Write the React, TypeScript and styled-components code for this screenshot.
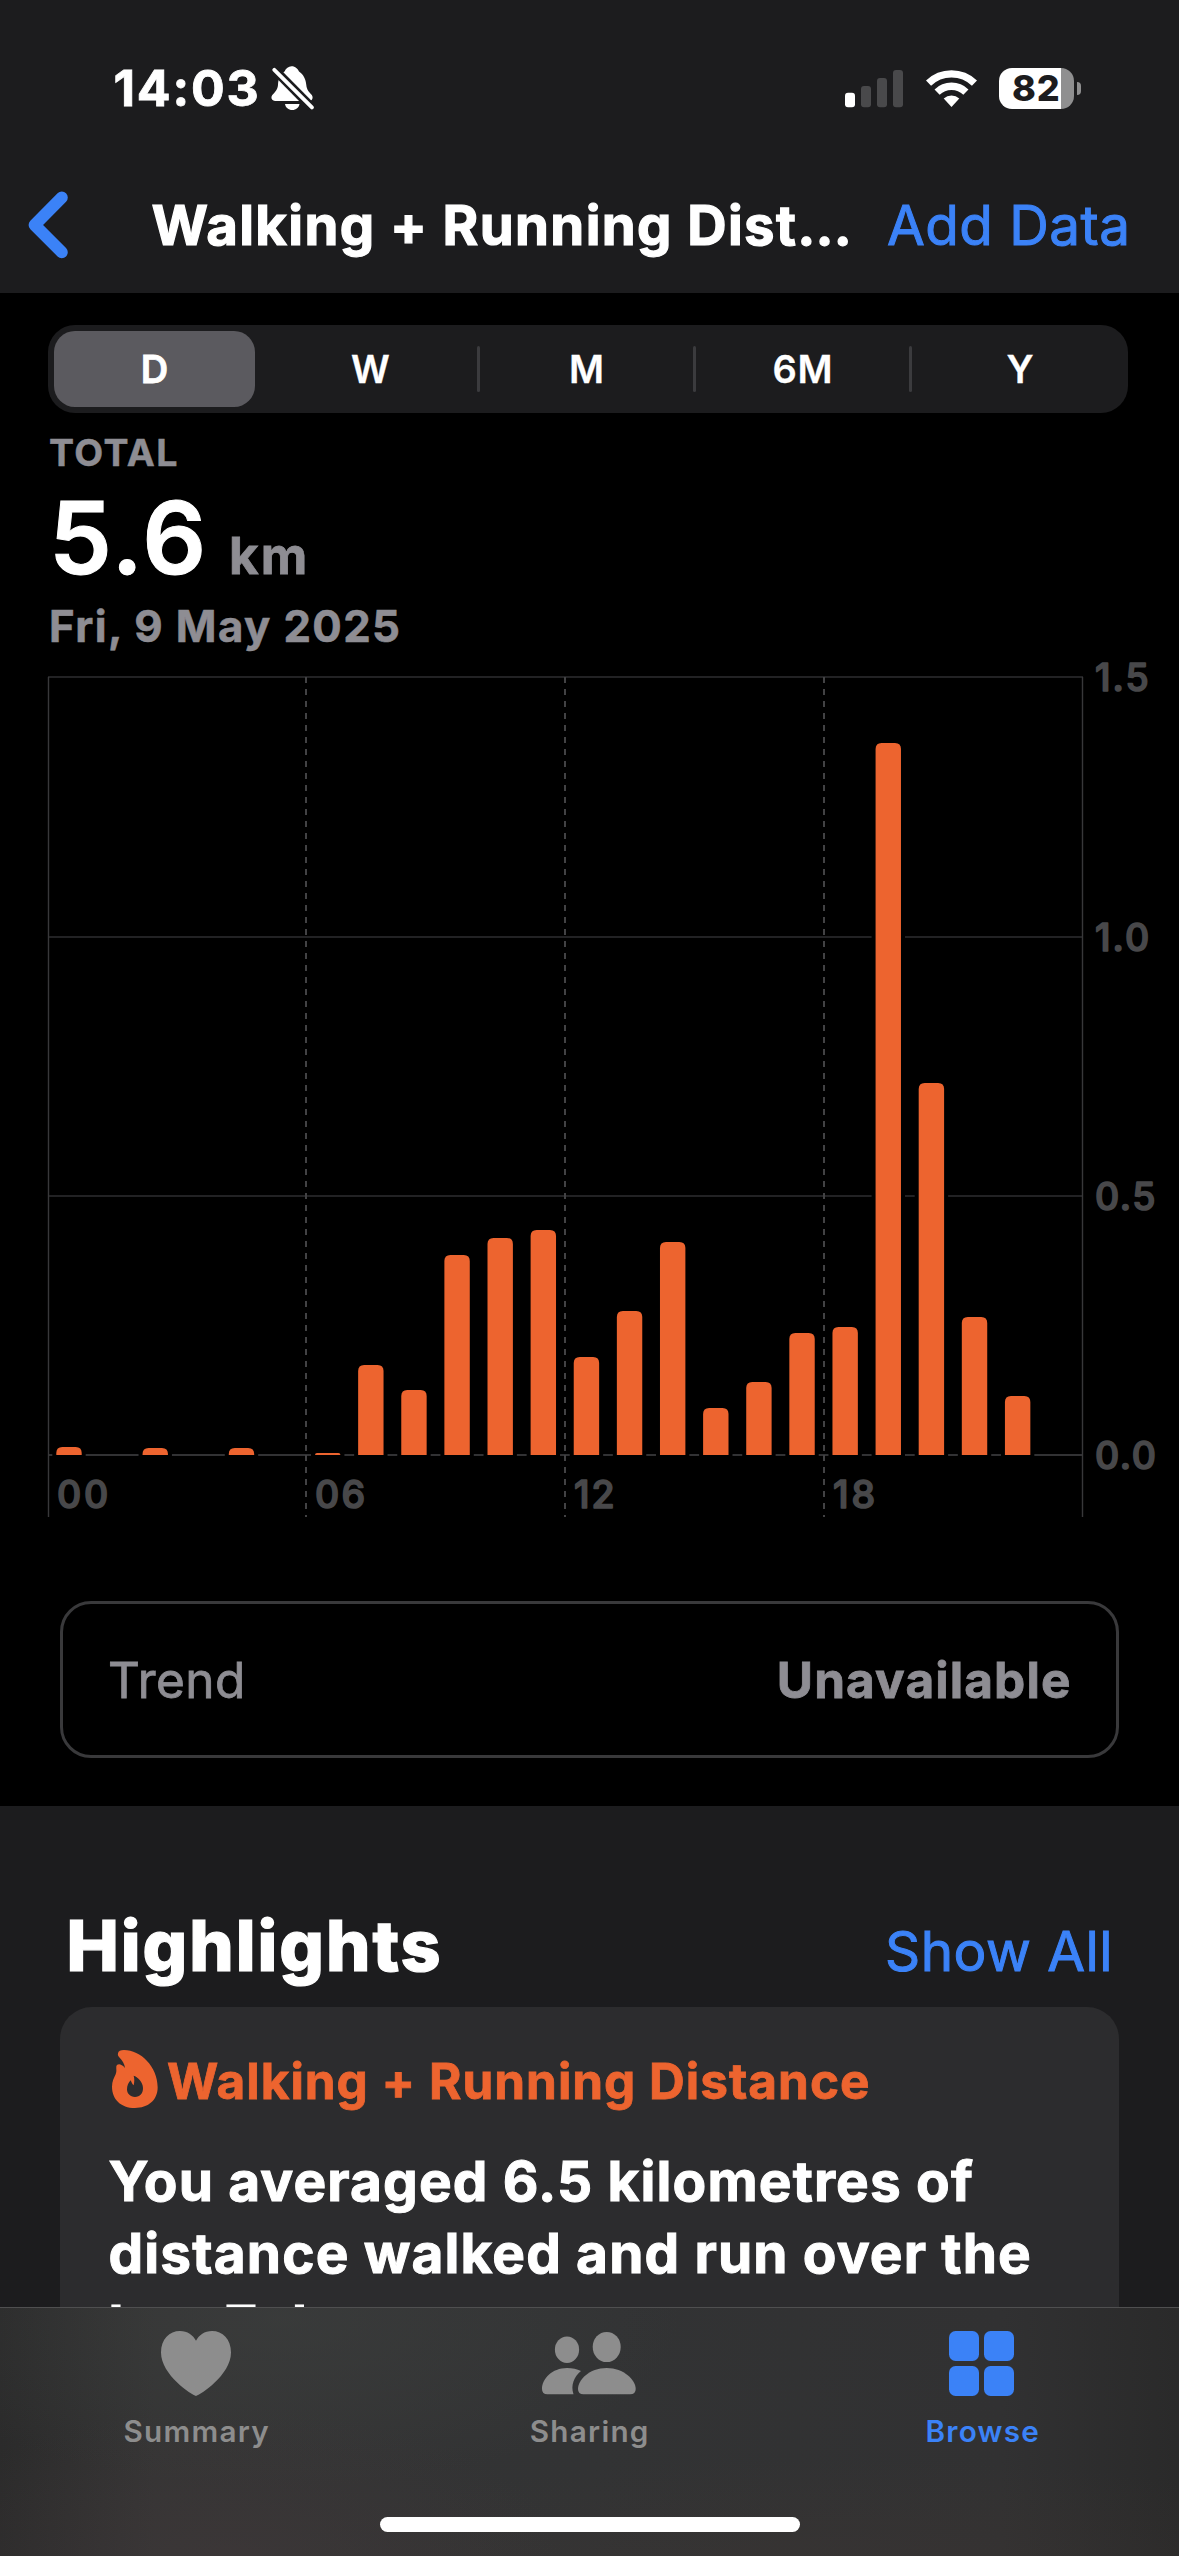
import React from "react";
import styled, { createGlobalStyle } from "styled-components";

const blue = "#3b82f7";
const orange = "#ed642f";
const grey = "#8e8d93";

const GlobalStyle = createGlobalStyle`
  * { box-sizing: border-box; }
  html { background: #000; }
  body {
    margin: 0;
    background: #000;
    color: #fff;
    font-family: Inter, "Liberation Sans", sans-serif;
  }
  svg { display: block; flex: none; }
`;

const Screen = styled.div`
  position: relative;
  width: 1179px;
  height: 2556px;
  overflow: hidden;
  background: #000;
`;

const Header = styled.header`
  height: 293px;
  background: #1c1c1e;
`;

const StatusBar = styled.div`
  display: flex;
  align-items: center;
  height: 176px;
  padding: 0 98px 0 113.5px;
`;

const Time = styled.span`
  width: 157.5px;
  font-size: 50px;
  font-weight: 700;
  letter-spacing: 1.8px;
  line-height: 60px;
  -webkit-text-stroke: 0.8px;
`;

const StatusIcons = styled.div`
  display: flex;
  align-items: center;
  gap: 22.4px;
  margin-left: auto;
`;

const Battery = styled.div`
  display: flex;
  align-items: center;
  gap: 3px;
`;

const BatteryBody = styled.div`
  width: 75px;
  height: 41px;
  padding-left: 13px;
  border-radius: 13px;
  background: linear-gradient(90deg, #fff 83%, #8f8f90 83%);
  color: #1c1c1e;
  font-size: 36px;
  font-weight: 800;
  letter-spacing: 0.8px;
  line-height: 41px;
`;

const BatteryNub = styled.div`
  width: 4px;
  height: 13px;
  border-radius: 0 5px 5px 0;
  background: #8f8f90;
`;

const NavBar = styled.nav`
  display: flex;
  align-items: center;
  height: 98px;
  padding-left: 28px;
`;

const NavTitle = styled.h1`
  width: 735.5px;
  margin: 0 0 0 83.4px;
  font-size: 54.5px;
  font-weight: 700;
  letter-spacing: 1.38px;
  line-height: 66px;
  white-space: nowrap;
  -webkit-text-stroke: 1.2px;
`;

const LinkText = styled.span<{ $spacing: number }>`
  color: ${blue};
  font-size: 54.8px;
  letter-spacing: ${(p) => p.$spacing}px;
  line-height: 66px;
  white-space: nowrap;
  -webkit-text-stroke: 1px;
`;

const Segments = styled.div`
  display: flex;
  align-items: center;
  width: 1080px;
  height: 88px;
  margin: 32px 0 0 48px;
  border-radius: 27px;
  background: #1c1c1e;
`;

const Segment = styled.div<{ $selected?: boolean; $last?: boolean }>`
  display: flex;
  align-items: center;
  justify-content: center;
  width: ${(p) => (p.$selected ? 201 : p.$last ? 216 : 213)}px;
  height: 76px;
  margin: 0 ${(p) => (p.$selected ? 6 : 0)}px;
  border-radius: 21px;
  background: ${(p) => (p.$selected ? "#5b5a5f" : "transparent")};
  font-size: 38px;
  font-weight: 600;
  text-indent: 0.8px;
  letter-spacing: 0.8px;
  -webkit-text-stroke: ${(p) => (p.$selected ? 0.8 : 0.3)}px;
`;

const Divider = styled.div<{ $hidden?: boolean }>`
  width: 3px;
  height: 46px;
  border-radius: 2px;
  background: ${(p) => (p.$hidden ? "transparent" : "#3b3b3e")};
`;

const Summary = styled.section`
  margin-top: 15px;
  padding-left: 49px;
  color: ${grey};
  font-weight: 700;
`;

const Caption = styled.div`
  font-size: 37.5px;
  letter-spacing: 1.5px;
  line-height: 50px;
  -webkit-text-stroke: 0.5px;
`;

const ValueRow = styled.div`
  display: flex;
  align-items: baseline;
  height: 121px;
`;

const Value = styled.span`
  width: 180px;
  color: #fff;
  font-size: 100px;
  font-weight: 600;
  letter-spacing: 1.8px;
  line-height: 119px;
  -webkit-text-stroke: 1px;
`;

const Unit = styled.span`
  font-size: 51px;
  letter-spacing: 2.2px;
  line-height: 60px;
  -webkit-text-stroke: 0.8px;
`;

const DateLine = styled.div`
  font-size: 43.7px;
  letter-spacing: 1.4px;
  line-height: 55px;
  -webkit-text-stroke: 0.6px;
`;

const ChartLabel = styled.text`
  fill: #48484a;
  stroke: #48484a;
  stroke-width: 1.6px;
  stroke-linejoin: round;
  font-size: 37.5px;
  font-weight: 500;
`;

const Trend = styled.div`
  display: flex;
  align-items: center;
  justify-content: space-between;
  width: 1059px;
  height: 157px;
  margin: 71px 0 48px 60px;
  padding: 0 45px;
  border: 3px solid #39393b;
  border-radius: 31px;
  color: ${grey};
  font-size: 49.5px;
`;

const TrendLabel = styled.span`
  letter-spacing: 0.5px;
  -webkit-text-stroke: 0.8px;
`;

const TrendValue = styled.span`
  margin-right: -0.5px;
  font-weight: 700;
  letter-spacing: 1.1px;
  -webkit-text-stroke: 0.8px;
`;

const Highlights = styled.section`
  height: 760px;
  padding: 98px 60px 0;
  background: #1c1c1e;
`;

const SectionHead = styled.div`
  display: flex;
  align-items: baseline;
  justify-content: space-between;
  height: 84px;
  padding: 0 6px 0 6.5px;
`;

const SectionTitle = styled.h2`
  margin: 0;
  font-size: 70px;
  font-weight: 800;
  letter-spacing: 1.95px;
  line-height: 84px;
  -webkit-text-stroke: 1.2px;
`;

const Card = styled.article`
  height: 520px;
  margin-top: 19px;
  padding: 43px 48.5px;
  border-radius: 32px;
  background: #2c2c2e;
`;

const CardHead = styled.div`
  display: flex;
  align-items: center;
  gap: 9px;
  height: 58px;
  padding-left: 3.5px;
  color: ${orange};
`;

const CardTitle = styled.h3`
  margin: 4px 0 0;
  font-size: 49.5px;
  font-weight: 700;
  letter-spacing: 1px;
  white-space: nowrap;
  -webkit-text-stroke: 0.8px;
`;

const CardBody = styled.p`
  margin: 37px 0 0;
  font-size: 55px;
  font-weight: 700;
  letter-spacing: 1.12px;
  line-height: 72px;
  white-space: nowrap;
  -webkit-text-stroke: 1px;
`;

const TabBar = styled.nav`
  position: absolute;
  left: 0;
  bottom: 0;
  display: grid;
  grid-template: 225px 1fr / repeat(3, 1fr);
  justify-items: center;
  width: 1179px;
  height: 249px;
  border-top: 1px solid #4f4f50;
  background:
    radial-gradient(ellipse 330px 150px at 230px 250px, rgba(70, 58, 60, 0.4), transparent),
    radial-gradient(ellipse 560px 110px at 830px 260px, rgba(64, 54, 50, 0.35), transparent),
    radial-gradient(ellipse 400px 170px at 280px 10px, rgba(64, 67, 66, 0.45), transparent),
    linear-gradient(90deg, #2b2b2b, #343434 13%, #323334 50%, #313132 85%, #2a2a2a);
`;

const Tab = styled.div<{ $active?: boolean }>`
  display: flex;
  flex-direction: column;
  align-items: center;
  margin-right: 1px;
  padding-top: 23px;
  color: ${(p) => (p.$active ? blue : "#8d8d8d")};
`;

const TabLabel = styled.span`
  margin-top: 17px;
  padding-left: 1.5px;
  font-size: 29.7px;
  font-weight: 600;
  letter-spacing: 1.25px;
  line-height: 36px;
`;

const HomeIndicator = styled.div`
  position: absolute;
  left: 380px;
  bottom: 24px;
  width: 420px;
  height: 15px;
  border-radius: 8px;
  background: #fff;
`;

const BellOff = () => (
  <svg width="43" height="45" viewBox="270.5 66 43 45">
    <path
      fill="#fff"
      d="M291 66.3C295 66.3 297.3 69 298.5 71.5C303 74.5 305.3 79 305.8 85C306.2 90 309 92.5 311.3 95C313 97.5 312 101 308.5 101H274.5C271 101 270 97.5 271.8 95C274.5 92 277 90 277.5 85C277.8 79 279.5 74.5 284 71.5C285.5 68.5 288 66.3 291 66.3ZM284.5 104H299C298.5 107.5 295.5 110 291.8 110C288 110 285 107.5 284.5 104Z"
    />
    <path d="M270 65.7L315 111.3" stroke="#1c1c1e" strokeWidth="9" />
    <path d="M273.8 69.8L311.4 107.4" stroke="#fff" strokeWidth="3.8" strokeLinecap="round" />
  </svg>
);

const Signal = () => (
  <svg width="58" height="41" viewBox="846 67 58 41">
    <rect x="846" y="91.7" width="10" height="14.6" rx="3" fill="#fff" />
    <rect x="862" y="85" width="10" height="21.3" rx="3" fill="#49494b" />
    <rect x="878" y="77" width="10" height="29.3" rx="3" fill="#49494b" />
    <rect x="894" y="69" width="10" height="37.3" rx="3" fill="#49494b" />
  </svg>
);

const Wifi = () => (
  <svg width="51" height="41" viewBox="-25.5 -39 51 41">
    <g fill="none" stroke="#fff">
      <path d="M-23 -23.8A33.1 33.1 0 0 1 23 -23.8" strokeWidth="7.4" />
      <path d="M-14.4 -14.9A20.7 20.7 0 0 1 14.4 -14.9" strokeWidth="7.4" />
    </g>
    <path d="M0 0L-7.8 -8.4A11.6 11.6 0 0 1 7.8 -8.4Z" fill="#fff" />
  </svg>
);

const Back = () => (
  <svg width="40" height="68" viewBox="28 191 40 68">
    <path
      d="M61.8 197.6L34.6 225L61.8 252.2"
      fill="none"
      stroke={blue}
      strokeWidth="12"
      strokeLinecap="round"
      strokeLinejoin="round"
    />
  </svg>
);

const Flame = () => (
  <svg width="46" height="58" viewBox="36 48 138 174">
    <path
      fill="currentColor"
      fillRule="evenodd"
      d="M54 58C55 51 62 48 72 48C122 48 173 98 173 160C173 200 143 222 105 222C62 222 36 195 36 158C36 142 42 132 47 121C51 112 48 105 49 97C51 88 64 88 75 102C74 88 66 79 59 71C54 66 53 63 54 58ZM101 125C112 128 129 143 129 162C129 178 120 189 105 189C90 189 81 178 81 166C81 155 86 145 92 139C95 145 96 150 101 154C103 144 104 135 101 125Z"
    />
  </svg>
);

const Heart = () => (
  <svg width="70" height="65" viewBox="0 0 70 65">
    <path
      fill="currentColor"
      d="M35 65C31 64 0 44 0 21.5C0 8 8.5 0 19 0C26.5 0 32 4 35 9.8C38 4 43.5 0 51 0C61.5 0 70 8 70 21.5C70 44 39 64 35 65Z"
    />
  </svg>
);

const People = () => (
  <svg width="94" height="65" viewBox="542 2331 94 65">
    <g fill="currentColor">
      <ellipse cx="567" cy="2349.7" rx="12.1" ry="13.2" />
      <ellipse cx="606.7" cy="2347" rx="14" ry="15.1" />
      <path d="M542 2389C542 2379 552 2368 567 2368Q575 2368 581 2371C574 2377 570.5 2385 573.5 2394.3H547.5Q542 2394.3 542 2389Z" />
      <path d="M578 2389C578 2380 589 2368 606.7 2368C624 2368 635.7 2380 635.7 2389Q635.7 2394.3 630 2394.3H583.5Q578 2394.3 578 2389Z" />
    </g>
  </svg>
);

const Squares = () => (
  <svg width="65" height="65" viewBox="0 0 65 65">
    <g fill="currentColor">
      <rect x="0" y="0" width="30" height="30" rx="6.5" />
      <rect x="35" y="0" width="30" height="30" rx="6.5" />
      <rect x="0" y="35" width="30" height="30" rx="6.5" />
      <rect x="35" y="35" width="30" height="30" rx="6.5" />
    </g>
  </svg>
);

/* Hour of the day and the y at which its bar starts. */
const bars: [number, number][] = [
  [0, 1447], [2, 1448], [4, 1448], [6, 1453], [7, 1365], [8, 1390], [9, 1255],
  [10, 1238], [11, 1230], [12, 1357], [13, 1311], [14, 1242], [15, 1408],
  [16, 1382], [17, 1333], [18, 1327], [19, 743], [20, 1083], [21, 1317], [22, 1396],
];

const barPath = (x: number, y: number) => {
  const r = Math.min(6, 1455 - y);
  return `M${x} 1455V${y + r}Q${x} ${y} ${x + r} ${y}H${x + 25.4 - r}Q${x + 25.4} ${y} ${x + 25.4} ${y + r}V1455Z`;
};

const hours: [string, number, number][] = [
  ["00", 57, 2.8],
  ["06", 315, 2.2],
  ["12", 574, 2],
  ["18", 833, 3],
];

const scale: [string, number, number][] = [
  ["1.5", 691, 2],
  ["1.0", 950.5, 2],
  ["0.5", 1209.5, 1.6],
  ["0.0", 1469, 1.6],
];

const Chart = () => (
  <svg width="1179" height="876" viewBox="0 654 1179 876">
    <g stroke="#222224" strokeWidth="2">
      <path d="M48 677H1083M48 937H1083M48 1196H1083" />
      <path d="M48 1455H1083" stroke="#323234" />
    </g>
    <path d="M48.5 677V1517M1082.5 677V1517" stroke="#38383a" strokeWidth="1.4" />
    <g stroke="#424244" strokeWidth="2" strokeDasharray="6 6">
      <path d="M306 677V1455M565 677V1455M824 677V1455" />
      <path d="M306 1455V1517M565 1455V1517M824 1455V1517" />
    </g>
    {bars.map(([hour, y]) => (
      <g key={hour}>
        <rect x={52.3 + hour * 43.12} y={y - 3} width="33.4" height={1460 - y} fill="#000" />
        <path d={barPath(56.3 + hour * 43.12, y)} fill={orange} />
      </g>
    ))}
    {scale.map(([label, y, spacing]) => (
      <ChartLabel key={label} x={1095} y={y} letterSpacing={spacing}>
        {label}
      </ChartLabel>
    ))}
    {hours.map(([label, x, spacing]) => (
      <ChartLabel key={label} x={x} y={1508} letterSpacing={spacing}>
        {label}
      </ChartLabel>
    ))}
  </svg>
);

export default function App() {
  return (
    <Screen>
      <GlobalStyle />
      <Header>
        <StatusBar>
          <Time>14:03</Time>
          <BellOff />
          <StatusIcons>
            <Signal />
            <Wifi />
            <Battery>
              <BatteryBody>82</BatteryBody>
              <BatteryNub />
            </Battery>
          </StatusIcons>
        </StatusBar>
        <NavBar>
          <Back />
          <NavTitle>Walking + Running Dist…</NavTitle>
          <LinkText $spacing={0.5}>Add Data</LinkText>
        </NavBar>
      </Header>

      <Segments>
        <Segment $selected>D</Segment>
        <Divider $hidden />
        <Segment>W</Segment>
        <Divider />
        <Segment>M</Segment>
        <Divider />
        <Segment>6M</Segment>
        <Divider />
        <Segment $last>Y</Segment>
      </Segments>

      <Summary>
        <Caption>TOTAL</Caption>
        <ValueRow>
          <Value>5.6</Value>
          <Unit>km</Unit>
        </ValueRow>
        <DateLine>Fri, 9 May 2025</DateLine>
      </Summary>

      <Chart />

      <Trend>
        <TrendLabel>Trend</TrendLabel>
        <TrendValue>Unavailable</TrendValue>
      </Trend>

      <Highlights>
        <SectionHead>
          <SectionTitle>Highlights</SectionTitle>
          <LinkText $spacing={0.5}>Show All</LinkText>
        </SectionHead>
        <Card>
          <CardHead>
            <Flame />
            <CardTitle>Walking + Running Distance</CardTitle>
          </CardHead>
          <CardBody>
            You averaged 6.5 kilometres of
            <br />
            distance walked and run over the
            <br />
            last 7 days.
          </CardBody>
        </Card>
      </Highlights>

      <TabBar>
        <Tab>
          <Heart />
          <TabLabel>Summary</TabLabel>
        </Tab>
        <Tab>
          <People />
          <TabLabel>Sharing</TabLabel>
        </Tab>
        <Tab $active>
          <Squares />
          <TabLabel>Browse</TabLabel>
        </Tab>
        <HomeIndicator />
      </TabBar>
    </Screen>
  );
}
